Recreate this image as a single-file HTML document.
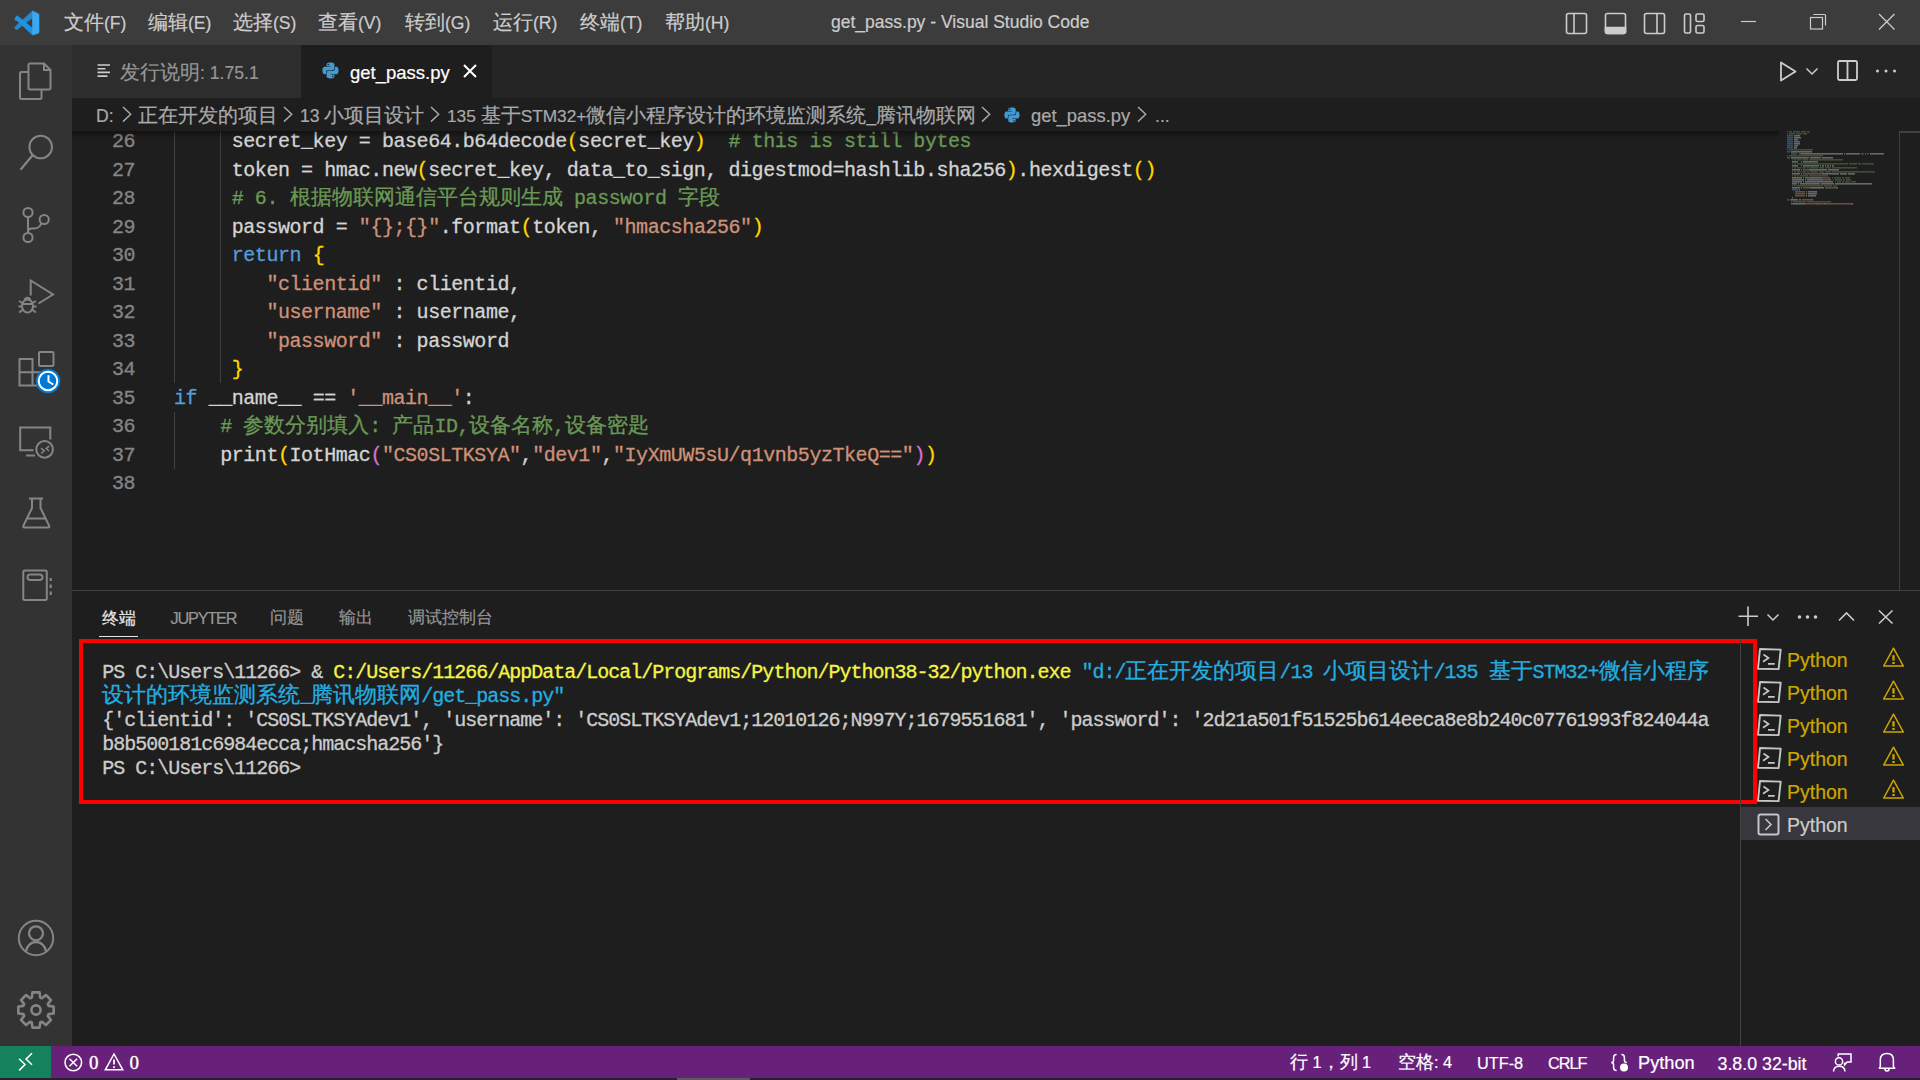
<!DOCTYPE html>
<html><head><meta charset="utf-8">
<style>
*{box-sizing:border-box}
html,body{margin:0;padding:0}
body{width:1920px;height:1080px;overflow:hidden;position:relative;background:#1e1e1e;font-family:"Liberation Sans",sans-serif;color:#cccccc}
.a{position:absolute}
.ui{font-family:"Liberation Sans",sans-serif;font-size:19.5px;white-space:pre;line-height:1;-webkit-text-stroke:0.2px currentColor}
.l{font-size:17.6px}
svg{position:absolute;overflow:visible}
/* title bar */
#title{left:0;top:0;width:1920px;height:45px;background:#3c3c3c}
.menu{top:13px;color:#cccccc}
/* activity */
#act{left:0;top:45px;width:72px;height:1001px;background:#333333}
/* tabs */
#tabs{left:72px;top:45px;width:1848px;height:53px;background:#252526}
#tab1{left:72px;top:45px;width:229px;height:53px;background:#2d2d2d}
#tab2{left:301px;top:45px;width:191px;height:53px;background:#1e1e1e}
#bc{left:72px;top:98px;width:1848px;height:33px;background:#1e1e1e}
#editor{left:72px;top:131px;width:1848px;height:459px;background:#1e1e1e;overflow:hidden}
.code{font-family:"Liberation Mono",monospace;font-size:20px;letter-spacing:-0.45px;-webkit-text-stroke:0.3px currentColor;white-space:pre;line-height:28.5px;height:28.5px;color:#d4d4d4}
.cj{font-size:21px;letter-spacing:0}
.ln{color:#858585;text-align:right;width:60px}
.k{color:#569cd6}.s{color:#ce9178}.c{color:#6a9955}.y{color:#ffd700}.p{color:#da70d6}
.guide{width:1px;background:#404040}
/* panel */
#panel{left:72px;top:590px;width:1848px;height:456px;background:#1e1e1e;border-top:1px solid #414141}
.term{font-family:"Liberation Mono",monospace;font-size:20px;letter-spacing:-1px;-webkit-text-stroke:0.3px currentColor;white-space:pre;line-height:24px;height:24px;color:#cccccc}
.tcj{font-size:22px;letter-spacing:0}
.ty{color:#f5f543}.tc{color:#23aee0}
#status{left:0;top:1047px;width:1920px;height:33px;background:#68217a}
</style></head><body>

<!-- TITLE BAR -->
<div id="title" class="a"></div>
<svg style="left:0;top:0" width="50" height="45" viewBox="0 0 50 45" stroke-linejoin="round">
  <path d="M32.5 10.9 L32.5 18 L17.4 29.2 Q16.2 30 15.3 29 L14.9 27.9 Q14.6 26.9 15.5 26.2 Z" fill="#2a86c9" stroke="#2a86c9" stroke-width="0.6"/>
  <path d="M15.5 17.6 Q14.6 18.3 15 19.3 L15.4 20.3 Q16 21 17 20.6 L32.5 35 L32.5 28 L17.6 15.9 Q16.6 15.2 15.5 17.6 Z" fill="#1f93e3" stroke="#1f93e3" stroke-width="0.6"/>
  <path d="M32.5 10.9 L38.4 13.8 Q39 14.1 39 14.8 V32.2 Q39 32.9 38.4 33.2 L32.5 35 Z" fill="#3aa8f2" stroke="#3aa8f2" stroke-width="0.6"/>
</svg>
<div class="a ui menu" style="left:64px">文件<span class="l">(F)</span></div>
<div class="a ui menu" style="left:148px">编辑<span class="l">(E)</span></div>
<div class="a ui menu" style="left:233px">选择<span class="l">(S)</span></div>
<div class="a ui menu" style="left:318px">查看<span class="l">(V)</span></div>
<div class="a ui menu" style="left:405px">转到<span class="l">(G)</span></div>
<div class="a ui menu" style="left:493px">运行<span class="l">(R)</span></div>
<div class="a ui menu" style="left:580px">终端<span class="l">(T)</span></div>
<div class="a ui menu" style="left:665px">帮助<span class="l">(H)</span></div>
<div class="a ui" style="left:831px;top:14px;font-size:17.5px;color:#cccccc">get_pass.py - Visual Studio Code</div>
<svg style="left:1550px;top:0" width="370" height="45" viewBox="1550 0 370 45" fill="none" stroke="#cccccc" stroke-width="1.6">
  <rect x="1566.5" y="13.5" width="20" height="20" rx="2"/>
  <path d="M1574 13.5 V33.5"/>
  <rect x="1605.5" y="13.5" width="20" height="20" rx="2"/>
  <path d="M1605.5 27.5 H1625.5 V31.5 Q1625.5 33.5 1623.5 33.5 H1607.5 Q1605.5 33.5 1605.5 31.5 Z" fill="#cccccc"/>
  <rect x="1644.5" y="13.5" width="20" height="20" rx="2"/>
  <path d="M1657 13.5 V33.5"/>
  <rect x="1684.5" y="14" width="6" height="19" rx="1.5"/>
  <rect x="1696" y="14" width="8" height="7.5" rx="1.5"/>
  <rect x="1696" y="25.5" width="8" height="7.5" rx="1.5"/>
  <path d="M1741 21.5 H1756" stroke-width="1.2"/>
  <path d="M1813.5 14.5 H1824.5 Q1825.5 14.5 1825.5 15.5 V25.5" stroke-width="1.2"/>
  <rect x="1810.5" y="17.5" width="12" height="11.5" stroke-width="1.2"/>
  <path d="M1879 14 L1894.5 29.5 M1894.5 14 L1879 29.5" stroke-width="1.3"/>
</svg>

<!-- ACTIVITY BAR -->
<div id="act" class="a"></div>
<svg style="left:0;top:45px" width="72" height="1002" viewBox="0 45 72 1002" fill="none" stroke="#858585" stroke-width="2">
  <!-- explorer -->
  <path d="M28.5 72 H21.5 Q20 72 20 73.5 V97.5 Q20 99 21.5 99 H40 Q41.5 99 41.5 97.5 V90"/>
  <path d="M30 63.5 H44 L50.5 70 V88 Q50.5 89.5 49 89.5 H30 Q28.5 89.5 28.5 88 V65 Q28.5 63.5 30 63.5 Z"/>
  <path d="M44 64 V70 H50" />
  <!-- search -->
  <circle cx="40.7" cy="147" r="11.3"/>
  <path d="M32.6 155.2 L20.5 169.8" stroke-width="2.2"/>
  <!-- scm -->
  <circle cx="28" cy="212.5" r="4.6"/>
  <circle cx="44.2" cy="219.5" r="4.6"/>
  <circle cx="28" cy="237.5" r="4.6"/>
  <path d="M28 217 V233"/>
  <path d="M41.5 223 Q39.5 228.5 34 228.5 H32 Q28 228.5 28 232"/>
  <!-- run debug -->
  <path d="M30.7 295.5 V280.5 L53 294.5 L38.5 303.5"/>
  <ellipse cx="27.5" cy="306" rx="5.5" ry="6.5"/>
  <path d="M22 304 H33 M19 301 L22.5 303 M36 301 L32.5 303 M18.5 306.5 H22 M33 306.5 H36.5 M19 312.5 L22.5 310 M36 312.5 L32.5 310 M24.5 299.5 Q27.5 296 30.5 299.5"/>
  <!-- extensions -->
  <path d="M19.5 359 H32.5 V385.5 H19.5 Z M19.5 372.2 H42 M32.5 372.2 V385.5 H38"/>
  <rect x="39" y="352" width="14.5" height="14" rx="1"/>
  <!-- remote -->
  <path d="M33.5 450.2 H20.2 V427.5 H50.3 V439.5"/>
  <path d="M26 455.5 H35"/>
  <circle cx="44.6" cy="449.4" r="8.3"/>
  <path d="M41 448.2 L44.2 450.8 L41.2 453.5 M49.1 446.1 L46.2 448.6 L49.1 451" stroke-width="1.5"/>
  <!-- testing -->
  <path d="M29 498.5 H43 M32 498.5 V508 L23.5 525.5 Q22.5 527.5 24.5 527.5 H48 Q50 527.5 49 525.5 L40.5 508 V498.5 M27 518.5 H45.5"/>
  <!-- notebook -->
  <rect x="23.3" y="570.5" width="23.5" height="29.5" rx="1.5"/>
  <rect x="27.5" y="574.5" width="15" height="5.5" rx="2.75"/>
  <path d="M50.7 578 V581 M50.7 584.5 V588 M50.7 591.5 V595" stroke-width="2.2"/>
  <!-- accounts -->
  <circle cx="36" cy="938" r="17.2"/>
  <circle cx="36" cy="933.3" r="7" stroke-width="2.3"/>
  <path d="M25.8 951.8 Q28 942 36 942 Q44 942 46.2 951.8" stroke-width="2.3"/>
  <!-- gear -->
  <path id="gear" d="M31.85 997.47 L32.42 992.36 L39.58 992.36 L40.15 997.47 L41.92 998.20 L45.95 995.00 L51.00 1000.05 L47.80 1004.08 L48.53 1005.85 L53.64 1006.42 L53.64 1013.58 L48.53 1014.15 L47.80 1015.92 L51.00 1019.95 L45.95 1025.00 L41.92 1021.80 L40.15 1022.53 L39.58 1027.64 L32.42 1027.64 L31.85 1022.53 L30.08 1021.80 L26.05 1025.00 L21.00 1019.95 L24.20 1015.92 L23.47 1014.15 L18.36 1013.58 L18.36 1006.42 L23.47 1005.85 L24.20 1004.08 L21.00 1000.05 L26.05 995.00 L30.08 998.20 Z" stroke-linejoin="round" stroke-width="2.6"/>
  <circle cx="36" cy="1010" r="4.6" stroke-width="2.6"/>
</svg>
<svg style="left:0;top:0" width="72" height="400">
  <circle cx="48" cy="381" r="12.3" fill="#0078d4"/>
  <circle cx="48" cy="381" r="9.3" fill="none" stroke="#ffffff" stroke-width="2"/>
  <path d="M48.5 375.3 V381.5 L53.3 384.5" fill="none" stroke="#ffffff" stroke-width="2"/>
</svg>

<!-- TABS -->
<div id="tabs" class="a"></div>
<div id="tab1" class="a"></div>
<div id="tab2" class="a"></div>
<!-- tab1 content -->
<svg style="left:97px;top:64px" width="14" height="14" viewBox="0 0 14 14" fill="none" stroke="#cccccc" stroke-width="1.6">
  <path d="M0.5 1 H13 M0.5 4.7 H8.5 M0.5 8.4 H13 M0.5 12.1 H10.5"/>
</svg>
<div class="a ui" style="left:120px;top:63px;color:#969696">发行说明<span class="l">: 1.75.1</span></div>
<!-- tab2 content -->
<svg style="left:322px;top:62px" width="17" height="17" viewBox="0 0 16 16">
  <path d="M7.9 0.5 C4.1 0.5 4.3 2.2 4.3 2.2 V3.9 H8 V4.5 H2.8 C2.8 4.5 0.4 4.2 0.4 8 C0.4 11.8 2.5 11.6 2.5 11.6 H3.8 V9.8 C3.8 9.8 3.7 7.7 5.9 7.7 H9.6 C9.6 7.7 11.7 7.8 11.7 5.7 V2.3 C11.7 2.3 12 0.5 7.9 0.5 Z M5.9 1.6 A0.7 0.7 0 1 1 5.9 3 A0.7 0.7 0 1 1 5.9 1.6 Z" fill="#3f9bd1"/>
  <path d="M8.1 15.5 C11.9 15.5 11.7 13.8 11.7 13.8 V12.1 H8 V11.5 H13.2 C13.2 11.5 15.6 11.8 15.6 8 C15.6 4.2 13.5 4.4 13.5 4.4 H12.2 V6.2 C12.2 6.2 12.3 8.3 10.1 8.3 H6.4 C6.4 8.3 4.3 8.2 4.3 10.3 V13.7 C4.3 13.7 4 15.5 8.1 15.5 Z M10.1 14.4 A0.7 0.7 0 1 1 10.1 13 A0.7 0.7 0 1 1 10.1 14.4 Z" fill="#3f9bd1"/>
</svg>
<div class="a ui" style="left:350px;top:63px;color:#ffffff"><span class="l" style="font-size:18.5px">get_pass.py</span></div>
<svg style="left:463px;top:64px" width="14" height="14" viewBox="0 0 14 14" fill="none" stroke="#ffffff" stroke-width="2">
  <path d="M1 1 L13 13 M13 1 L1 13"/>
</svg>
<!-- editor actions -->
<svg style="left:1770px;top:55px" width="140" height="32" viewBox="1770 55 140 32" fill="none" stroke="#cccccc" stroke-width="1.8">
  <path d="M1781 62.5 L1795.5 71.5 L1781 80.5 Z" stroke-linejoin="round"/>
  <path d="M1806.5 68.5 L1812 74 L1817.5 68.5" stroke-width="1.5"/>
  <rect x="1838" y="61" width="19" height="19" rx="1.5"/>
  <path d="M1847.5 61 V80"/>
  <circle cx="1877.5" cy="71" r="1.5" fill="#cccccc" stroke="none"/>
  <circle cx="1886" cy="71" r="1.5" fill="#cccccc" stroke="none"/>
  <circle cx="1894.5" cy="71" r="1.5" fill="#cccccc" stroke="none"/>
</svg>
<div id="bc" class="a"></div>
<div class="a ui" style="left:96px;top:106px;color:#a9a9a9"><span class="l">D:</span></div>
<svg style="left:0;top:0" width="1200" height="131" fill="none" stroke="#a9a9a9" stroke-width="1.45">
  <path d="M123 107 L130.7 114.3 L123 121.6"/>
  <path d="M284 107 L291.7 114.3 L284 121.6"/>
  <path d="M431 107 L438.7 114.3 L431 121.6"/>
  <path d="M982 107 L989.7 114.3 L982 121.6"/>
  <path d="M1138 107 L1145.7 114.3 L1138 121.6"/>
</svg>
<div class="a ui" style="left:138px;top:106px;color:#a9a9a9">正在开发的项目</div>
<div class="a ui" style="left:300px;top:106px;color:#a9a9a9"><span class="l">13 </span>小项目设计</div>
<div class="a ui" style="left:447px;top:106px;color:#a9a9a9"><span class="l" style="font-size:17.3px">135 </span>基于<span class="l" style="font-size:17.3px">STM32+</span>微信小程序设计的环境监测系统<span class="l" style="font-size:17.3px">_</span>腾讯物联网</div>
<svg style="left:1004px;top:107px" width="16" height="16" viewBox="0 0 16 16">
  <path d="M7.9 0.5 C4.1 0.5 4.3 2.2 4.3 2.2 V3.9 H8 V4.5 H2.8 C2.8 4.5 0.4 4.2 0.4 8 C0.4 11.8 2.5 11.6 2.5 11.6 H3.8 V9.8 C3.8 9.8 3.7 7.7 5.9 7.7 H9.6 C9.6 7.7 11.7 7.8 11.7 5.7 V2.3 C11.7 2.3 12 0.5 7.9 0.5 Z M5.9 1.6 A0.7 0.7 0 1 1 5.9 3 A0.7 0.7 0 1 1 5.9 1.6 Z" fill="#3f9bd1"/>
  <path d="M8.1 15.5 C11.9 15.5 11.7 13.8 11.7 13.8 V12.1 H8 V11.5 H13.2 C13.2 11.5 15.6 11.8 15.6 8 C15.6 4.2 13.5 4.4 13.5 4.4 H12.2 V6.2 C12.2 6.2 12.3 8.3 10.1 8.3 H6.4 C6.4 8.3 4.3 8.2 4.3 10.3 V13.7 C4.3 13.7 4 15.5 8.1 15.5 Z M10.1 14.4 A0.7 0.7 0 1 1 10.1 13 A0.7 0.7 0 1 1 10.1 14.4 Z" fill="#3f9bd1"/>
</svg>
<div class="a ui" style="left:1031px;top:106px;color:#a9a9a9"><span class="l" style="font-size:18.4px">get_pass.py</span></div>
<div class="a ui" style="left:1155px;top:106px;color:#a9a9a9"><span class="l">...</span></div>

<!-- EDITOR -->
<div id="editor" class="a"></div>
<div class="a" style="left:72px;top:131px;width:1848px;height:459px;overflow:hidden">
<div class="a code ln" style="left:3px;top:-3.0px">26</div>
<div class="a code" style="left:159.75px;top:-3.0px">secret_key = base64.b64decode<span class="y">(</span>secret_key<span class="y">)</span>  <span class="c"># this is still bytes</span></div>
<div class="a code ln" style="left:3px;top:25.5px">27</div>
<div class="a code" style="left:159.75px;top:25.5px">token = hmac.new<span class="y">(</span>secret_key, data_to_sign, digestmod=hashlib.sha256<span class="y">)</span>.hexdigest<span class="y">()</span></div>
<div class="a code ln" style="left:3px;top:54.0px">28</div>
<div class="a code" style="left:159.75px;top:54.0px"><span class="c"># 6. <span class="cj">根据物联网通信平台规则生成</span> password <span class="cj">字段</span></span></div>
<div class="a code ln" style="left:3px;top:82.5px">29</div>
<div class="a code" style="left:159.75px;top:82.5px">password = <span class="s">"{};{}"</span>.format<span class="y">(</span>token, <span class="s">"hmacsha256"</span><span class="y">)</span></div>
<div class="a code ln" style="left:3px;top:111.0px">30</div>
<div class="a code" style="left:159.75px;top:111.0px"><span class="k">return</span> <span class="y">{</span></div>
<div class="a code ln" style="left:3px;top:139.5px">31</div>
<div class="a code" style="left:194.40px;top:139.5px"><span class="s">"clientid"</span> : clientid,</div>
<div class="a code ln" style="left:3px;top:168.0px">32</div>
<div class="a code" style="left:194.40px;top:168.0px"><span class="s">"username"</span> : username,</div>
<div class="a code ln" style="left:3px;top:196.5px">33</div>
<div class="a code" style="left:194.40px;top:196.5px"><span class="s">"password"</span> : password</div>
<div class="a code ln" style="left:3px;top:225.0px">34</div>
<div class="a code" style="left:159.75px;top:225.0px"><span class="y">}</span></div>
<div class="a code ln" style="left:3px;top:253.5px">35</div>
<div class="a code" style="left:102.00px;top:253.5px"><span class="k">if</span> __name__ == <span class="s">'__main__'</span>:</div>
<div class="a code ln" style="left:3px;top:282.0px">36</div>
<div class="a code" style="left:148.20px;top:282.0px"><span class="c"># <span class="cj">参数分别填入</span>: <span class="cj">产品</span>ID,<span class="cj">设备名称</span>,<span class="cj">设备密匙</span></span></div>
<div class="a code ln" style="left:3px;top:310.5px">37</div>
<div class="a code" style="left:148.20px;top:310.5px">print<span class="y">(</span>IotHmac<span class="p">(</span><span class="s">"CS0SLTKSYA"</span>,<span class="s">"dev1"</span>,<span class="s">"IyXmUW5sU/q1vnb5yzTkeQ=="</span><span class="p">)</span><span class="y">)</span></div>
<div class="a code ln" style="left:3px;top:339.0px">38</div>
<div class="a guide" style="left:102px;top:0;height:252.0px"></div>
<div class="a guide" style="left:148px;top:0;height:252.0px"></div>
<div class="a guide" style="left:102px;top:280.5px;height:57px"></div>
</div>

<!-- MINIMAP -->
<div id="mm"><svg style="left:0;top:0" width="1920" height="300" opacity="0.4"><rect x="1787" y="131" width="1" height="1.6" fill="#6a9955"/><rect x="1789" y="131" width="3" height="1.6" fill="#6a9955"/><rect x="1793" y="131" width="7" height="1.6" fill="#6a9955"/><rect x="1801" y="131" width="5" height="1.6" fill="#6a9955"/><rect x="1807" y="131" width="3" height="1.6" fill="#6a9955"/><rect x="1787" y="133" width="1" height="1.6" fill="#6a9955"/><rect x="1789" y="133" width="6" height="1.6" fill="#6a9955"/><rect x="1796" y="133" width="6" height="1.6" fill="#6a9955"/><rect x="1803" y="133" width="4" height="1.6" fill="#6a9955"/><rect x="1787" y="135" width="6" height="1.6" fill="#569cd6"/><rect x="1794" y="135" width="6" height="1.6" fill="#d4d4d4"/><rect x="1787" y="137" width="6" height="1.6" fill="#569cd6"/><rect x="1794" y="137" width="7" height="1.6" fill="#d4d4d4"/><rect x="1787" y="139" width="6" height="1.6" fill="#569cd6"/><rect x="1794" y="139" width="4" height="1.6" fill="#d4d4d4"/><rect x="1787" y="141" width="6" height="1.6" fill="#569cd6"/><rect x="1794" y="141" width="6" height="1.6" fill="#d4d4d4"/><rect x="1787" y="143" width="6" height="1.6" fill="#569cd6"/><rect x="1794" y="143" width="6" height="1.6" fill="#d4d4d4"/><rect x="1787" y="145" width="6" height="1.6" fill="#569cd6"/><rect x="1794" y="145" width="4" height="1.6" fill="#d4d4d4"/><rect x="1787" y="147" width="6" height="1.6" fill="#569cd6"/><rect x="1794" y="147" width="3" height="1.6" fill="#d4d4d4"/><rect x="1787" y="149" width="1" height="1.6" fill="#6a9955"/><rect x="1789" y="149" width="24" height="1.6" fill="#6a9955"/><rect x="1787" y="151" width="3" height="1.6" fill="#569cd6"/><rect x="1791" y="151" width="21" height="1.6" fill="#d4d4d4"/><rect x="1791" y="153" width="6" height="1.6" fill="#569cd6"/><rect x="1799" y="153" width="2" height="1.6" fill="#ce9178"/><rect x="1801" y="153" width="42" height="1.6" fill="#d4d4d4"/><rect x="1844" y="153" width="1" height="1.6" fill="#d4d4d4"/><rect x="1846" y="153" width="14" height="1.6" fill="#d4d4d4"/><rect x="1861" y="153" width="3" height="1.6" fill="#569cd6"/><rect x="1865" y="153" width="1" height="1.6" fill="#d4d4d4"/><rect x="1867" y="153" width="2" height="1.6" fill="#569cd6"/><rect x="1870" y="153" width="14" height="1.6" fill="#d4d4d4"/><rect x="1787" y="155" width="1" height="1.6" fill="#6a9955"/><rect x="1789" y="155" width="34" height="1.6" fill="#6a9955"/><rect x="1787" y="157" width="3" height="1.6" fill="#569cd6"/><rect x="1791" y="157" width="18" height="1.6" fill="#d4d4d4"/><rect x="1810" y="157" width="11" height="1.6" fill="#d4d4d4"/><rect x="1822" y="157" width="11" height="1.6" fill="#d4d4d4"/><rect x="1792" y="159" width="1" height="1.6" fill="#6a9955"/><rect x="1794" y="159" width="2" height="1.6" fill="#6a9955"/><rect x="1797" y="159" width="4" height="1.6" fill="#6a9955"/><rect x="1802" y="159" width="6" height="1.6" fill="#6a9955"/><rect x="1809" y="159" width="34" height="1.6" fill="#6a9955"/><rect x="1792" y="161" width="6" height="1.6" fill="#d4d4d4"/><rect x="1801" y="161" width="1" height="1.6" fill="#d4d4d4"/><rect x="1803" y="161" width="15" height="1.6" fill="#d4d4d4"/><rect x="1792" y="163" width="1" height="1.6" fill="#6a9955"/><rect x="1794" y="163" width="2" height="1.6" fill="#6a9955"/><rect x="1797" y="163" width="51" height="1.6" fill="#6a9955"/><rect x="1849" y="163" width="8" height="1.6" fill="#6a9955"/><rect x="1858" y="163" width="3" height="1.6" fill="#6a9955"/><rect x="1862" y="163" width="12" height="1.6" fill="#6a9955"/><rect x="1792" y="165" width="6" height="1.6" fill="#d4d4d4"/><rect x="1801" y="165" width="1" height="1.6" fill="#d4d4d4"/><rect x="1803" y="165" width="16" height="1.6" fill="#d4d4d4"/><rect x="1820" y="165" width="1" height="1.6" fill="#d4d4d4"/><rect x="1822" y="165" width="2" height="1.6" fill="#d4d4d4"/><rect x="1825" y="165" width="1" height="1.6" fill="#d4d4d4"/><rect x="1827" y="165" width="2" height="1.6" fill="#d4d4d4"/><rect x="1830" y="165" width="1" height="1.6" fill="#d4d4d4"/><rect x="1832" y="165" width="2" height="1.6" fill="#d4d4d4"/><rect x="1792" y="167" width="1" height="1.6" fill="#6a9955"/><rect x="1794" y="167" width="2" height="1.6" fill="#6a9955"/><rect x="1797" y="167" width="4" height="1.6" fill="#6a9955"/><rect x="1802" y="167" width="4" height="1.6" fill="#6a9955"/><rect x="1807" y="167" width="2" height="1.6" fill="#6a9955"/><rect x="1810" y="167" width="8" height="1.6" fill="#6a9955"/><rect x="1819" y="167" width="5" height="1.6" fill="#6a9955"/><rect x="1825" y="167" width="6" height="1.6" fill="#6a9955"/><rect x="1832" y="167" width="25" height="1.6" fill="#6a9955"/><rect x="1792" y="169" width="8" height="1.6" fill="#d4d4d4"/><rect x="1801" y="169" width="1" height="1.6" fill="#d4d4d4"/><rect x="1803" y="169" width="6" height="1.6" fill="#ce9178"/><rect x="1809" y="169" width="18" height="1.6" fill="#d4d4d4"/><rect x="1828" y="169" width="11" height="1.6" fill="#d4d4d4"/><rect x="1792" y="171" width="1" height="1.6" fill="#6a9955"/><rect x="1794" y="171" width="2" height="1.6" fill="#6a9955"/><rect x="1797" y="171" width="4" height="1.6" fill="#6a9955"/><rect x="1802" y="171" width="4" height="1.6" fill="#6a9955"/><rect x="1807" y="171" width="2" height="1.6" fill="#6a9955"/><rect x="1810" y="171" width="8" height="1.6" fill="#6a9955"/><rect x="1819" y="171" width="5" height="1.6" fill="#6a9955"/><rect x="1825" y="171" width="6" height="1.6" fill="#6a9955"/><rect x="1832" y="171" width="43" height="1.6" fill="#6a9955"/><rect x="1792" y="173" width="8" height="1.6" fill="#d4d4d4"/><rect x="1801" y="173" width="1" height="1.6" fill="#d4d4d4"/><rect x="1803" y="173" width="19" height="1.6" fill="#ce9178"/><rect x="1822" y="173" width="17" height="1.6" fill="#d4d4d4"/><rect x="1840" y="173" width="7" height="1.6" fill="#d4d4d4"/><rect x="1848" y="173" width="7" height="1.6" fill="#d4d4d4"/><rect x="1792" y="175" width="1" height="1.6" fill="#6a9955"/><rect x="1794" y="175" width="2" height="1.6" fill="#6a9955"/><rect x="1797" y="175" width="2" height="1.6" fill="#6a9955"/><rect x="1800" y="175" width="8" height="1.6" fill="#6a9955"/><rect x="1809" y="175" width="19" height="1.6" fill="#6a9955"/><rect x="1792" y="177" width="10" height="1.6" fill="#d4d4d4"/><rect x="1803" y="177" width="1" height="1.6" fill="#d4d4d4"/><rect x="1805" y="177" width="17" height="1.6" fill="#d4d4d4"/><rect x="1822" y="177" width="7" height="1.6" fill="#ce9178"/><rect x="1829" y="177" width="1" height="1.6" fill="#d4d4d4"/><rect x="1832" y="177" width="1" height="1.6" fill="#6a9955"/><rect x="1834" y="177" width="7" height="1.6" fill="#6a9955"/><rect x="1842" y="177" width="2" height="1.6" fill="#6a9955"/><rect x="1845" y="177" width="5" height="1.6" fill="#6a9955"/><rect x="1792" y="179" width="12" height="1.6" fill="#d4d4d4"/><rect x="1805" y="179" width="1" height="1.6" fill="#d4d4d4"/><rect x="1807" y="179" width="16" height="1.6" fill="#d4d4d4"/><rect x="1823" y="179" width="7" height="1.6" fill="#ce9178"/><rect x="1830" y="179" width="1" height="1.6" fill="#d4d4d4"/><rect x="1833" y="179" width="1" height="1.6" fill="#6a9955"/><rect x="1835" y="179" width="7" height="1.6" fill="#6a9955"/><rect x="1843" y="179" width="2" height="1.6" fill="#6a9955"/><rect x="1846" y="179" width="5" height="1.6" fill="#6a9955"/><rect x="1792" y="181" width="10" height="1.6" fill="#d4d4d4"/><rect x="1803" y="181" width="1" height="1.6" fill="#d4d4d4"/><rect x="1805" y="181" width="28" height="1.6" fill="#d4d4d4"/><rect x="1835" y="181" width="1" height="1.6" fill="#6a9955"/><rect x="1837" y="181" width="4" height="1.6" fill="#6a9955"/><rect x="1842" y="181" width="2" height="1.6" fill="#6a9955"/><rect x="1845" y="181" width="5" height="1.6" fill="#6a9955"/><rect x="1851" y="181" width="5" height="1.6" fill="#6a9955"/><rect x="1792" y="183" width="5" height="1.6" fill="#d4d4d4"/><rect x="1798" y="183" width="1" height="1.6" fill="#d4d4d4"/><rect x="1800" y="183" width="20" height="1.6" fill="#d4d4d4"/><rect x="1821" y="183" width="13" height="1.6" fill="#d4d4d4"/><rect x="1835" y="183" width="37" height="1.6" fill="#d4d4d4"/><rect x="1792" y="185" width="1" height="1.6" fill="#6a9955"/><rect x="1794" y="185" width="2" height="1.6" fill="#6a9955"/><rect x="1797" y="185" width="26" height="1.6" fill="#6a9955"/><rect x="1824" y="185" width="8" height="1.6" fill="#6a9955"/><rect x="1833" y="185" width="4" height="1.6" fill="#6a9955"/><rect x="1792" y="187" width="8" height="1.6" fill="#d4d4d4"/><rect x="1801" y="187" width="1" height="1.6" fill="#d4d4d4"/><rect x="1803" y="187" width="7" height="1.6" fill="#ce9178"/><rect x="1810" y="187" width="14" height="1.6" fill="#d4d4d4"/><rect x="1825" y="187" width="12" height="1.6" fill="#ce9178"/><rect x="1837" y="187" width="1" height="1.6" fill="#d4d4d4"/><rect x="1792" y="189" width="6" height="1.6" fill="#569cd6"/><rect x="1799" y="189" width="1" height="1.6" fill="#d4d4d4"/><rect x="1795" y="191" width="10" height="1.6" fill="#ce9178"/><rect x="1806" y="191" width="1" height="1.6" fill="#d4d4d4"/><rect x="1808" y="191" width="9" height="1.6" fill="#d4d4d4"/><rect x="1795" y="193" width="10" height="1.6" fill="#ce9178"/><rect x="1806" y="193" width="1" height="1.6" fill="#d4d4d4"/><rect x="1808" y="193" width="9" height="1.6" fill="#d4d4d4"/><rect x="1795" y="195" width="10" height="1.6" fill="#ce9178"/><rect x="1806" y="195" width="1" height="1.6" fill="#d4d4d4"/><rect x="1808" y="195" width="8" height="1.6" fill="#d4d4d4"/><rect x="1792" y="197" width="1" height="1.6" fill="#d4d4d4"/><rect x="1787" y="199" width="2" height="1.6" fill="#569cd6"/><rect x="1790" y="199" width="8" height="1.6" fill="#d4d4d4"/><rect x="1799" y="199" width="2" height="1.6" fill="#d4d4d4"/><rect x="1802" y="199" width="10" height="1.6" fill="#ce9178"/><rect x="1812" y="199" width="1" height="1.6" fill="#d4d4d4"/><rect x="1791" y="201" width="1" height="1.6" fill="#6a9955"/><rect x="1793" y="201" width="13" height="1.6" fill="#6a9955"/><rect x="1807" y="201" width="24" height="1.6" fill="#6a9955"/><rect x="1791" y="203" width="14" height="1.6" fill="#d4d4d4"/><rect x="1805" y="203" width="12" height="1.6" fill="#ce9178"/><rect x="1817" y="203" width="1" height="1.6" fill="#d4d4d4"/><rect x="1818" y="203" width="6" height="1.6" fill="#ce9178"/><rect x="1824" y="203" width="1" height="1.6" fill="#d4d4d4"/><rect x="1825" y="203" width="26" height="1.6" fill="#ce9178"/><rect x="1851" y="203" width="2" height="1.6" fill="#d4d4d4"/></svg></div>
<div class="a" style="left:72px;top:131px;width:1707px;height:7px;background:linear-gradient(#00000070,#00000000)"></div>
<div class="a" style="left:1899px;top:131px;width:1px;height:459px;background:#404040"></div>
<div class="a" style="left:1899px;top:131px;width:21px;height:1.5px;background:#404040"></div>
<!-- PANEL -->
<div id="panel" class="a"></div>
<div class="a ui" style="left:102px;top:609.75px;font-size:16.5px;color:#e7e7e7">终端</div>
<div class="a" style="left:99px;top:635.5px;width:39px;height:1.6px;background:#e7e7e7"></div>
<div class="a ui" style="left:170.5px;top:610px;font-size:16.3px;letter-spacing:-1.2px;color:#969696">JUPYTER</div>
<div class="a ui" style="left:270px;top:609px;font-size:16.5px;color:#969696">问题</div>
<div class="a ui" style="left:339px;top:609px;font-size:16.5px;color:#969696">输出</div>
<div class="a ui" style="left:408px;top:609px;font-size:16.5px;color:#969696">调试控制台</div>
<svg style="left:1730px;top:600px" width="190" height="36" viewBox="1730 600 190 36" fill="none" stroke="#cccccc" stroke-width="1.6">
  <path d="M1748 606.5 V626 M1738.5 616.2 H1758"/>
  <path d="M1767.5 614.5 L1773 620 L1778.5 614.5" stroke-width="1.5"/>
  <circle cx="1799.5" cy="617" r="1.8" fill="#cccccc" stroke="none"/>
  <circle cx="1807.5" cy="617" r="1.8" fill="#cccccc" stroke="none"/>
  <circle cx="1815.5" cy="617" r="1.8" fill="#cccccc" stroke="none"/>
  <path d="M1839 620.5 L1846.5 613 L1854 620.5"/>
  <path d="M1879 610.5 L1892.5 623.5 M1892.5 610.5 L1879 623.5"/>
</svg>
<div class="a term" style="left:102.25px;top:660.75px">PS C:\Users\11266&gt; &amp; <span class="ty">C:/Users/11266/AppData/Local/Programs/Python/Python38-32/python.exe</span> <span class="tc">"d:/<span class="tcj">正在开发的项目</span>/13 <span class="tcj">小项目设计</span>/135 <span class="tcj">基于</span>STM32+<span class="tcj">微信小程序</span></span></div>
<div class="a term" style="left:102.25px;top:684.75px"><span class="tc"><span class="tcj">设计的环境监测系统</span>_<span class="tcj">腾讯物联网</span>/get_pass.py"</span></div>
<div class="a term" style="left:102.25px;top:708.75px">{'clientid': 'CS0SLTKSYAdev1', 'username': 'CS0SLTKSYAdev1;12010126;N997Y;1679551681', 'password': '2d21a501f51525b614eeca8e8b240c07761993f824044a</div>
<div class="a term" style="left:102.25px;top:732.75px">b8b500181c6984ecca;hmacsha256'}</div>
<div class="a term" style="left:102.25px;top:756.75px">PS C:\Users\11266&gt;</div>
<div class="a" style="left:79px;top:639px;width:1678px;height:165px;border:4px solid #ff0000"></div>
<div class="a" style="left:1740px;top:639px;width:1px;height:408px;background:#414141"></div>
<div class="a" style="left:1741px;top:807px;width:179px;height:33px;background:#37373d"></div>
<div class="a ui" style="left:1787px;top:650.8px;color:#cca700"><span class="l" style="font-size:19.5px">Python</span></div>
<div class="a ui" style="left:1787px;top:683.8px;color:#cca700"><span class="l" style="font-size:19.5px">Python</span></div>
<div class="a ui" style="left:1787px;top:716.8px;color:#cca700"><span class="l" style="font-size:19.5px">Python</span></div>
<div class="a ui" style="left:1787px;top:749.8px;color:#cca700"><span class="l" style="font-size:19.5px">Python</span></div>
<div class="a ui" style="left:1787px;top:782.8px;color:#cca700"><span class="l" style="font-size:19.5px">Python</span></div>
<div class="a ui" style="left:1787px;top:815.8px;color:#cccccc"><span class="l" style="font-size:19.5px">Python</span></div>
<svg style="left:0;top:0" width="1920" height="1080" fill="none" stroke="#c5c5c5" stroke-width="2"><path d="M1760 649 L1780.7 649.6 L1778.6 669.1 L1758 668.7 Z" stroke-linejoin="round" stroke-width="1.9"/>
<path d="M1763.5 654.5 L1768.5 658 L1763 661.7 M1768 663.8 H1774.7" stroke-width="1.7"/>
<path d="M1893.5 648.2 L1903.3 666 H1883.7 Z" stroke="#cca700" stroke-linejoin="round" stroke-width="1.5"/>
<path d="M1893.5 655.2 V660.6" stroke="#cca700" stroke-width="2.3"/>
<rect x="1892.3" y="662" width="2.4" height="2" fill="#cca700" stroke="none"/>
<path d="M1760 682 L1780.7 682.6 L1778.6 702.1 L1758 701.7 Z" stroke-linejoin="round" stroke-width="1.9"/>
<path d="M1763.5 687.5 L1768.5 691 L1763 694.7 M1768 696.8 H1774.7" stroke-width="1.7"/>
<path d="M1893.5 681.2 L1903.3 699 H1883.7 Z" stroke="#cca700" stroke-linejoin="round" stroke-width="1.5"/>
<path d="M1893.5 688.2 V693.6" stroke="#cca700" stroke-width="2.3"/>
<rect x="1892.3" y="695" width="2.4" height="2" fill="#cca700" stroke="none"/>
<path d="M1760 715 L1780.7 715.6 L1778.6 735.1 L1758 734.7 Z" stroke-linejoin="round" stroke-width="1.9"/>
<path d="M1763.5 720.5 L1768.5 724 L1763 727.7 M1768 729.8 H1774.7" stroke-width="1.7"/>
<path d="M1893.5 714.2 L1903.3 732 H1883.7 Z" stroke="#cca700" stroke-linejoin="round" stroke-width="1.5"/>
<path d="M1893.5 721.2 V726.6" stroke="#cca700" stroke-width="2.3"/>
<rect x="1892.3" y="728" width="2.4" height="2" fill="#cca700" stroke="none"/>
<path d="M1760 748 L1780.7 748.6 L1778.6 768.1 L1758 767.7 Z" stroke-linejoin="round" stroke-width="1.9"/>
<path d="M1763.5 753.5 L1768.5 757 L1763 760.7 M1768 762.8 H1774.7" stroke-width="1.7"/>
<path d="M1893.5 747.2 L1903.3 765 H1883.7 Z" stroke="#cca700" stroke-linejoin="round" stroke-width="1.5"/>
<path d="M1893.5 754.2 V759.6" stroke="#cca700" stroke-width="2.3"/>
<rect x="1892.3" y="761" width="2.4" height="2" fill="#cca700" stroke="none"/>
<path d="M1760 781 L1780.7 781.6 L1778.6 801.1 L1758 800.7 Z" stroke-linejoin="round" stroke-width="1.9"/>
<path d="M1763.5 786.5 L1768.5 790 L1763 793.7 M1768 795.8 H1774.7" stroke-width="1.7"/>
<path d="M1893.5 780.2 L1903.3 798 H1883.7 Z" stroke="#cca700" stroke-linejoin="round" stroke-width="1.5"/>
<path d="M1893.5 787.2 V792.6" stroke="#cca700" stroke-width="2.3"/>
<rect x="1892.3" y="794" width="2.4" height="2" fill="#cca700" stroke="none"/>
<rect x="1758.5" y="814.5" width="20" height="20" rx="2"/>
<path d="M1765.5 819 L1771 824.5 L1765.5 830" stroke-width="1.6"/></svg>

<!-- STATUS -->
<div class="a" style="left:0;top:1046px;width:1920px;height:32px;background:#68217a"></div>
<div class="a" style="left:0;top:1046px;width:51px;height:32px;background:#16825d"></div>
<div class="a" style="left:0;top:1078px;width:1920px;height:2px;background:#2b1f2f"></div>
<div class="a" style="left:677px;top:1078px;width:73px;height:2px;background:#5b5a5f"></div>
<svg style="left:0;top:1046px" width="1920" height="32" viewBox="0 1046 1920 32" fill="none" stroke="#ffffff" stroke-width="1.5">
  <path d="M19 1058.8 L25 1064.5 L19.2 1070.4 M32 1053.3 L26 1059.1 L32 1064.8"/>
  <circle cx="73.3" cy="1062.5" r="8.3"/>
  <path d="M69.5 1058.7 L77.1 1066.3 M77.1 1058.7 L69.5 1066.3"/>
  <path d="M114 1054 L122.8 1069.8 H105.3 Z" stroke-linejoin="miter"/>
  <path d="M114 1059.5 V1064.5" stroke-width="1.8"/>
  <path d="M114 1066.3 V1068" stroke-width="1.8"/>
  <!-- braces icon -->
  <path d="M1616.6 1054.6 Q1613.6 1054.6 1613.6 1057.6 V1060.2 Q1613.6 1062.5 1611.2 1062.5 Q1613.6 1062.5 1613.6 1064.8 V1067.6 Q1613.6 1070.6 1616.6 1070.6" stroke-width="1.5"/>
  <path d="M1621.4 1054.6 Q1624.4 1054.6 1624.4 1057.6 V1060.2 Q1624.4 1062.5 1626.8 1062.5" stroke-width="1.5"/>
  <circle cx="1624" cy="1067.6" r="4" fill="#ffffff" stroke="none"/>
  <!-- feedback icon -->
  <circle cx="1839" cy="1061.4" r="3.6" stroke-width="1.5"/>
  <path d="M1833.5 1071.5 Q1833.8 1066.2 1839.2 1066.2 Q1844.6 1066.2 1845 1071.5" stroke-width="1.5"/>
  <path d="M1838.2 1056.6 V1053.9 H1851 V1062.1 H1847.2 L1844.6 1064.8 V1062.6" stroke-width="1.5"/>
  <!-- bell -->
  <path d="M1880.3 1066.3 V1060 Q1880.3 1053.6 1887 1053.6 Q1893.4 1053.6 1893.4 1060 V1066.3 L1894.7 1068.3 H1879.3 Z" stroke-width="1.5" stroke-linejoin="round"/>
  <path d="M1884.9 1068.5 Q1884.9 1071 1887 1071 Q1889.1 1071 1889.1 1068.5" stroke-width="1.5"/>
</svg>
<div class="a" style="left:89px;top:1053px;font-family:'Liberation Serif',serif;font-size:19px;line-height:1;color:#ffffff;-webkit-text-stroke:0.35px #ffffff">0</div>
<div class="a" style="left:129.5px;top:1053px;font-family:'Liberation Serif',serif;font-size:19px;line-height:1;color:#ffffff;-webkit-text-stroke:0.35px #ffffff">0</div>
<div class="a ui" style="left:1290px;top:1053px;font-size:18px;color:#ffffff">行<span class="l" style="font-size:16.3px"> 1</span>，列<span class="l" style="font-size:16.3px"> 1</span></div>
<div class="a ui" style="left:1398px;top:1053px;font-size:18px;color:#ffffff">空格<span class="l" style="font-size:16.3px">: 4</span></div>
<div class="a ui" style="left:1477px;top:1053px;font-size:16.3px;color:#ffffff;top:1055px">UTF-8</div>
<div class="a ui" style="left:1548px;top:1055px;font-size:16.3px;letter-spacing:-1px;color:#ffffff">CRLF</div>
<div class="a ui" style="left:1638px;top:1053.5px;font-size:18.2px;color:#ffffff">Python</div>
<div class="a ui" style="left:1717.5px;top:1055.5px;font-size:17.8px;color:#ffffff">3.8.0 32-bit</div>

</body></html>
